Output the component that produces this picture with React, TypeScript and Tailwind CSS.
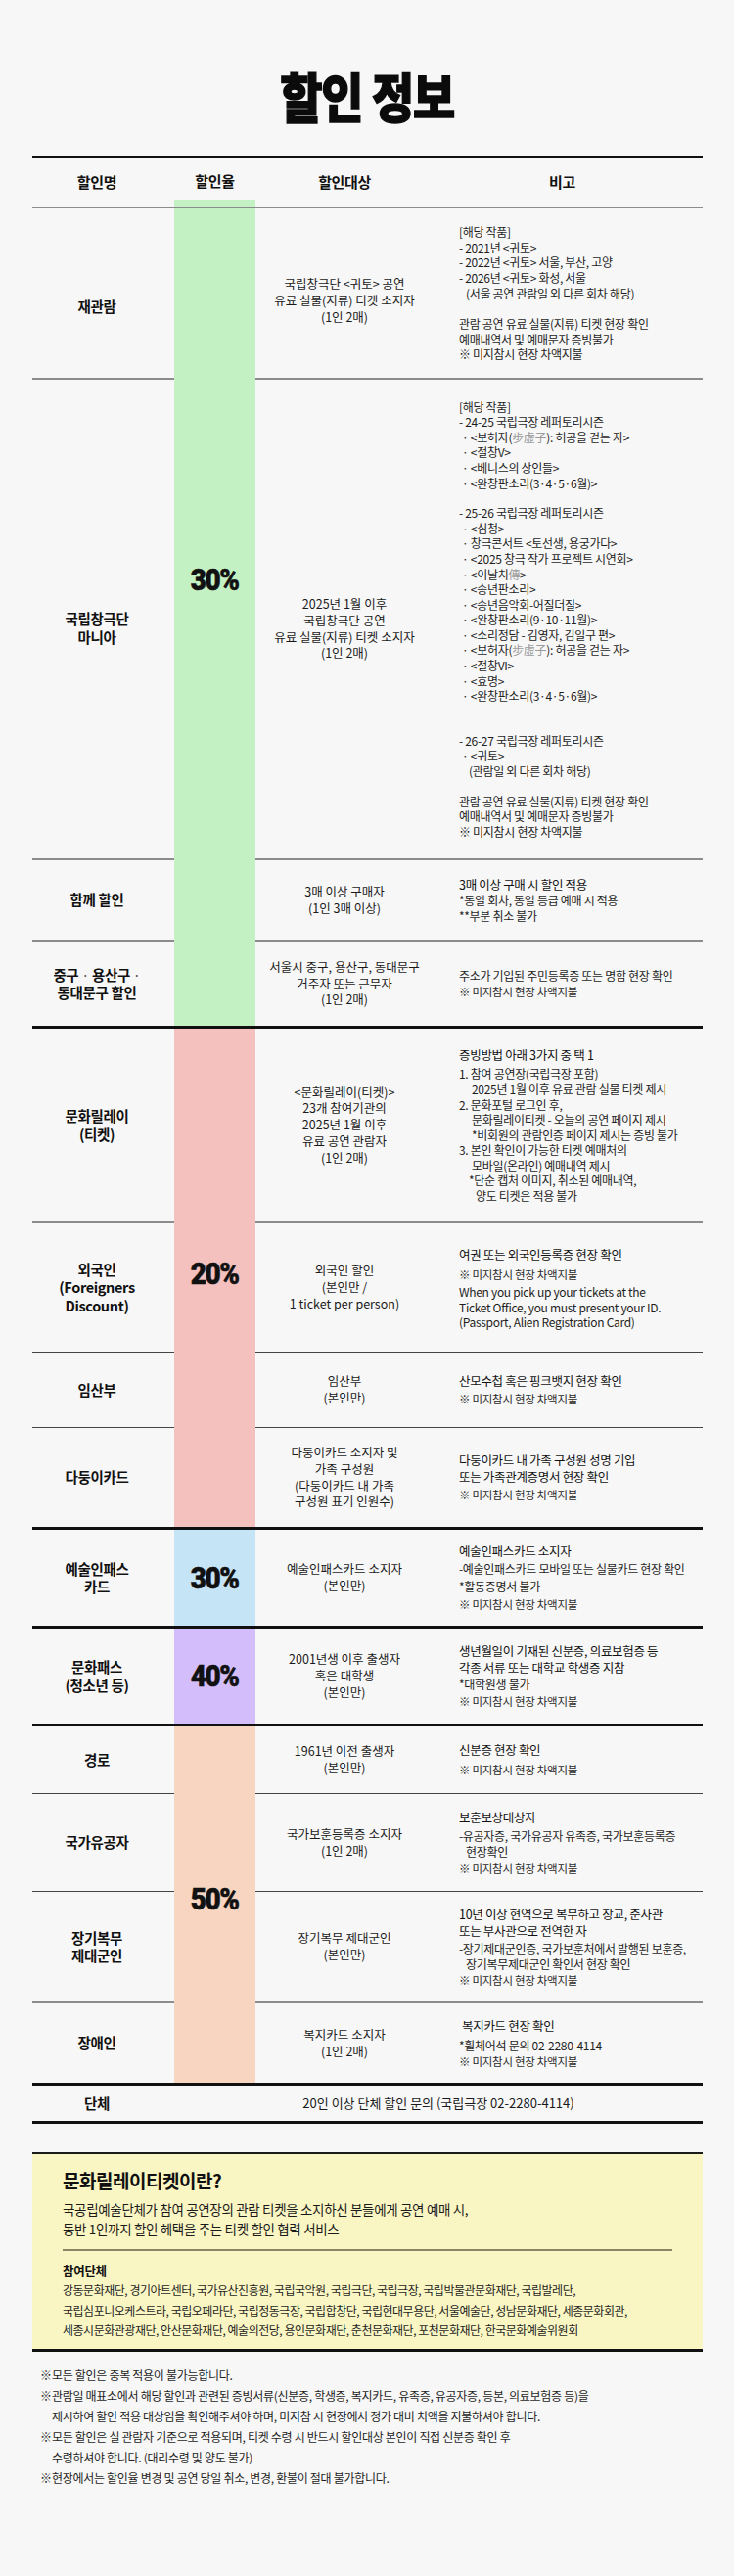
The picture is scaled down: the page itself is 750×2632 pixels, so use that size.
import React from 'react';
import clsx from 'clsx';

type Row = {
  name: React.ReactNode;
  h: string;
  border?: 'gray' | 'dark';
  namePad?: string;
  target: React.ReactNode;
  targetPad?: string;
  notes: React.ReactNode;
};

function borderClass(b?: 'gray' | 'dark') {
  if (b === 'gray') return 'border-t-2 border-[#8c8c8c]';
  if (b === 'dark') return 'border-t border-[#444]';
  return '';
}

function N({ children, className }: { children: React.ReactNode; className?: string }) {
  return (
    <p className={clsx('whitespace-nowrap text-[12px] leading-[15.6px] tracking-tight text-[#1e1e1e]', className)}>
      {children}
    </p>
  );
}

function H({ children, className }: { children: React.ReactNode; className?: string }) {
  return (
    <p className={clsx('whitespace-nowrap text-[12.5px] leading-[17px] tracking-tight text-[#111]', className)}>
      {children}
    </p>
  );
}

function S({ className }: { className?: string }) {
  return (
    <p className={clsx('whitespace-nowrap text-[11.5px] leading-[17px] tracking-tight text-[#2a2a2a]', className)}>
      ※ 미지참시 현장 차액지불
    </p>
  );
}

function Gray({ children }: { children: React.ReactNode }) {
  return <span className="text-[#9a9a9a]">{children}</span>;
}

function Lines({ items }: { items: string[] }) {
  return (
    <>
      {items.map((t, i) => (
        <React.Fragment key={i}>
          {i > 0 && <br />}
          {t}
        </React.Fragment>
      ))}
    </>
  );
}

function Group({
  rows,
  color,
  rate,
  rateClass,
}: {
  rows: Row[];
  color: string;
  rate: string;
  rateClass?: string;
}) {
  return (
    <div className="flex">
      <div className="flex w-[145px] flex-col">
        {rows.map((r, i) => (
          <div
            key={i}
            className={clsx(
              'flex items-center justify-center pr-[13px] text-center text-[14.5px] font-bold leading-[18.5px] tracking-tight text-[#111]',
              r.h,
              i > 0 && borderClass(r.border),
              r.namePad,
            )}
          >
            <div>{r.name}</div>
          </div>
        ))}
      </div>
      <div className={clsx('flex w-[83px] flex-col items-center', color, rateClass ?? 'justify-center')}>
        <span className="inline-block scale-x-[0.9] font-['Roboto','Noto_Sans',sans-serif] text-[31px] font-black leading-none tracking-tighter text-[#111] [-webkit-text-stroke:0.6px_#111]">
          {rate}
        </span>
      </div>
      <div className="flex w-[457px] flex-col">
        {rows.map((r, i) => (
          <div key={i} className={clsx('flex', r.h, i > 0 && borderClass(r.border))}>
            <div
              className={clsx(
                'flex w-[182px] items-center justify-center text-center text-[12.5px] leading-[16.7px] text-[#1a1a1a]',
                r.targetPad,
              )}
            >
              <div>{r.target}</div>
            </div>
            <div className="flex flex-1 flex-col justify-center pl-[26px]">{r.notes}</div>
          </div>
        ))}
      </div>
    </div>
  );
}

function Thick() {
  return <div className="h-[3px] bg-[#111]" />;
}

const greenRows: Row[] = [
  {
    name: '재관람',
    h: 'h-[173px]',
    namePad: 'pt-[28px]',
    target: <Lines items={['국립창극단 <귀토> 공연', '유료 실물(지류) 티켓 소지자', '(1인 2매)']} />,
    targetPad: 'pt-[16px]',
    notes: (
      <>
        <N>[해당 작품]</N>
        <N>- 2021년 &lt;귀토&gt;</N>
        <N>- 2022년 &lt;귀토&gt; 서울, 부산, 고양</N>
        <N>- 2026년 &lt;귀토&gt; 화성, 서울</N>
        <N className="pl-[7px]">(서울 공연 관람일 외 다른 회차 해당)</N>
        <div className="h-[16px]" />
        <N>관람 공연 유료 실물(지류) 티켓 현장 확인</N>
        <N>예매내역서 및 예매문자 증빙불가</N>
        <N>※ 미지참시 현장 차액지불</N>
      </>
    ),
  },
  {
    name: <Lines items={['국립창극단', '마니아']} />,
    h: 'h-[491px]',
    border: 'gray',
    namePad: 'pt-[18px]',
    target: <Lines items={['2025년 1월 이후', '국립창극단 공연', '유료 실물(지류) 티켓 소지자', '(1인 2매)']} />,
    targetPad: 'pt-[20px]',
    notes: (
      <>
        <N>[해당 작품]</N>
        <N>- 24-25 국립극장 레퍼토리시즌</N>
        <N className="pl-[3px]">
          · &lt;보허자(<Gray>步虛子</Gray>): 허공을 걷는 자&gt;
        </N>
        <N className="pl-[3px]">· &lt;절창V&gt;</N>
        <N className="pl-[3px]">· &lt;베니스의 상인들&gt;</N>
        <N className="pl-[3px]">· &lt;완창판소리(3·4·5·6월)&gt;</N>
        <div className="h-[15px]" />
        <N>- 25-26 국립극장 레퍼토리시즌</N>
        <N className="pl-[3px]">· &lt;심청&gt;</N>
        <N className="pl-[3px]">· 창극콘서트 &lt;토선생, 용궁가다&gt;</N>
        <N className="pl-[3px]">· &lt;2025 창극 작가 프로젝트 시연회&gt;</N>
        <N className="pl-[3px]">
          · &lt;이날치<Gray>傳</Gray>&gt;
        </N>
        <N className="pl-[3px]">· &lt;송년판소리&gt;</N>
        <N className="pl-[3px]">· &lt;송년음악회-어질더질&gt;</N>
        <N className="pl-[3px]">· &lt;완창판소리(9·10·11월)&gt;</N>
        <N className="pl-[3px]">· &lt;소리정담 - 김영자, 김일구 편&gt;</N>
        <N className="pl-[3px]">
          · &lt;보허자(<Gray>步虛子</Gray>): 허공을 걷는 자&gt;
        </N>
        <N className="pl-[3px]">· &lt;절창VI&gt;</N>
        <N className="pl-[3px]">· &lt;효명&gt;</N>
        <N className="pl-[3px]">· &lt;완창판소리(3·4·5·6월)&gt;</N>
        <div className="h-[30px]" />
        <N>- 26-27 국립극장 레퍼토리시즌</N>
        <N className="pl-[3px]">· &lt;귀토&gt;</N>
        <N className="pl-[10px]">(관람일 외 다른 회차 해당)</N>
        <div className="h-[15px]" />
        <N>관람 공연 유료 실물(지류) 티켓 현장 확인</N>
        <N>예매내역서 및 예매문자 증빙불가</N>
        <N>※ 미지참시 현장 차액지불</N>
      </>
    ),
  },
  {
    name: '함께 할인',
    h: 'h-[83px]',
    border: 'gray',
    target: <Lines items={['3매 이상 구매자', '(1인 3매 이상)']} />,
    notes: (
      <>
        <H className="leading-[16px]">3매 이상 구매 시 할인 적용</H>
        <N className="leading-[16px]">*동일 회차, 동일 등급 예매 시 적용</N>
        <N className="leading-[16px]">**부분 취소 불가</N>
      </>
    ),
  },
  {
    name: (
      <>
        중구 <span className="font-normal text-[#555]">·</span> 용산구 <span className="font-normal text-[#555]">·</span>
        <br />
        동대문구 할인
      </>
    ),
    h: 'h-[88px]',
    border: 'gray',
    target: <Lines items={['서울시 중구, 용산구, 동대문구', '거주자 또는 근무자', '(1인 2매)']} />,
    notes: (
      <>
        <N className="leading-[17px]">주소가 기입된 주민등록증 또는 명함 현장 확인</N>
        <S />
      </>
    ),
  },
];

const redRows: Row[] = [
  {
    name: <Lines items={['문화릴레이', '(티켓)']} />,
    h: 'h-[197px]',
    target: <Lines items={['<문화릴레이(티켓)>', '23개 참여기관의', '2025년 1월 이후', '유료 공연 관람자', '(1인 2매)']} />,
    notes: (
      <>
        <H className="mb-[3px]">증빙방법 아래 3가지 중 택 1</H>
        <N>1. 참여 공연장(국립극장 포함)</N>
        <N className="pl-[13px]">2025년 1월 이후 유료 관람 실물 티켓 제시</N>
        <N>2. 문화포털 로그인 후,</N>
        <N className="pl-[13px]">문화릴레이티켓 - 오늘의 공연 페이지 제시</N>
        <N className="pl-[13px]">*비회원의 관람인증 페이지 제시는 증빙 불가</N>
        <N>3. 본인 확인이 가능한 티켓 예매처의</N>
        <N className="pl-[13px]">모바일(온라인) 예매내역 제시</N>
        <N className="pl-[10px]">*단순 캡처 이미지, 취소된 예매내역,</N>
        <N className="pl-[17px]">양도 티켓은 적용 불가</N>
      </>
    ),
  },
  {
    name: <Lines items={['외국인', '(Foreigners', 'Discount)']} />,
    h: 'h-[133px]',
    border: 'gray',
    target: <Lines items={['외국인 할인', '(본인만 /', '1 ticket per person)']} />,
    notes: (
      <>
        <H className="leading-[20px]">여권 또는 외국인등록증 현장 확인</H>
        <S className="leading-[20px]" />
        <N className="leading-[15.7px]">When you pick up your tickets at the</N>
        <N className="leading-[15.7px]">Ticket Office, you must present your ID.</N>
        <N className="leading-[15.7px]">(Passport, Alien Registration Card)</N>
      </>
    ),
  },
  {
    name: '임산부',
    h: 'h-[77px]',
    border: 'dark',
    target: <Lines items={['임산부', '(본인만)']} />,
    notes: (
      <>
        <H className="leading-[19px]">산모수첩 혹은 핑크뱃지 현장 확인</H>
        <S className="leading-[19px]" />
      </>
    ),
  },
  {
    name: '다둥이카드',
    h: 'h-[102px]',
    border: 'dark',
    target: <Lines items={['다둥이카드 소지자 및', '가족 구성원', '(다둥이카드 내 가족', '구성원 표기 인원수)']} />,
    notes: (
      <>
        <H>다둥이카드 내 가족 구성원 성명 기입</H>
        <H>또는 가족관계증명서 현장 확인</H>
        <S className="mt-[2px]" />
      </>
    ),
  },
];

const blueRows: Row[] = [
  {
    name: <Lines items={['예술인패스', '카드']} />,
    h: 'h-[98px]',
    target: <Lines items={['예술인패스카드 소지자', '(본인만)']} />,
    notes: (
      <>
        <H className="leading-[18px]">예술인패스카드 소지자</H>
        <N className="leading-[18px]">-예술인패스카드 모바일 또는 실물카드 현장 확인</N>
        <N className="leading-[18px]">*활동증명서 불가</N>
        <S className="leading-[18px]" />
      </>
    ),
  },
];

const purpleRows: Row[] = [
  {
    name: <Lines items={['문화패스', '(청소년 등)']} />,
    h: 'h-[97px]',
    target: <Lines items={['2001년생 이후 출생자', '혹은 대학생', '(본인만)']} />,
    notes: (
      <>
        <H>생년월일이 기재된 신분증, 의료보험증 등</H>
        <H>각종 서류 또는 대학교 학생증 지참</H>
        <N className="leading-[18px]">*대학원생 불가</N>
        <S />
      </>
    ),
  },
];

const peachRows: Row[] = [
  {
    name: '경로',
    h: 'h-[68px]',
    target: <Lines items={['1961년 이전 출생자', '(본인만)']} />,
    notes: (
      <>
        <H className="leading-[20px]">신분증 현장 확인</H>
        <S className="leading-[20px]" />
      </>
    ),
  },
  {
    name: '국가유공자',
    h: 'h-[100px]',
    border: 'dark',
    target: <Lines items={['국가보훈등록증 소지자', '(1인 2매)']} />,
    notes: (
      <>
        <H className="mb-[3px]">보훈보상대상자</H>
        <N className="leading-[16.5px]">-유공자증, 국가유공자 유족증, 국가보훈등록증</N>
        <N className="pl-[7px] leading-[16.5px]">현장확인</N>
        <S />
      </>
    ),
  },
  {
    name: <Lines items={['장기복무', '제대군인']} />,
    h: 'h-[113px]',
    border: 'dark',
    target: <Lines items={['장기복무 제대군인', '(본인만)']} />,
    notes: (
      <>
        <H>10년 이상 현역으로 복무하고 장교, 준사관</H>
        <H className="mb-[2px]">또는 부사관으로 전역한 자</H>
        <N className="leading-[16px]">-장기제대군인증, 국가보훈처에서 발행된 보훈증,</N>
        <N className="pl-[7px] leading-[16px]">장기복무제대군인 확인서 현장 확인</N>
        <S />
      </>
    ),
  },
  {
    name: '장애인',
    h: 'h-[83px]',
    border: 'gray',
    target: <Lines items={['복지카드 소지자', '(1인 2매)']} />,
    notes: (
      <>
        <H className="mb-[3px] pl-[3px]">복지카드 현장 확인</H>
        <N className="leading-[17px]">*휠체어석 문의 02-2280-4114</N>
        <S />
      </>
    ),
  },
];

const orgLines = [
  '강동문화재단, 경기아트센터, 국가유산진흥원, 국립국악원, 국립극단, 국립극장, 국립박물관문화재단, 국립발레단,',
  '국립심포니오케스트라, 국립오페라단, 국립정동극장, 국립합창단, 국립현대무용단, 서울예술단, 성남문화재단, 세종문화회관,',
  '세종시문화관광재단, 안산문화재단, 예술의전당, 용인문화재단, 춘천문화재단, 포천문화재단, 한국문화예술위원회',
];

const footNotes: string[][] = [
  ['모든 할인은 중복 적용이 불가능합니다.'],
  [
    '관람일 매표소에서 해당 할인과 관련된 증빙서류(신분증, 학생증, 복지카드, 유족증, 유공자증, 등본, 의료보험증 등)을',
    '제시하여 할인 적용 대상임을 확인해주셔야 하며, 미지참 시 현장에서 정가 대비 치액을 지불하셔야 합니다.',
  ],
  [
    '모든 할인은 실 관람자 기준으로 적용되며, 티켓 수령 시 반드시 할인대상 본인이 직접 신분증 확인 후',
    '수령하셔야 합니다. (대리수령 및 양도 불가)',
  ],
  ['현장에서는 할인율 변경 및 공연 당일 취소, 변경, 환불이 절대 불가합니다.'],
];

export default function App() {
  return (
    <div className="min-h-[2632px] w-[750px] bg-[#f7f7f7] font-['Noto_Sans_CJK_KR','Noto_Sans',sans-serif] text-[#111]">
      <div className="flex h-[159px] justify-center pt-[71px]">
        <h1 className="inline-block scale-x-[0.87] text-[54px] font-black leading-none tracking-tight text-[#0b0b0b] [-webkit-text-stroke:1.5px_#0b0b0b]">
          할인 정보
        </h1>
      </div>

      <div className="mx-[33px] w-[685px]">
        <div className="h-[2px] bg-[#111]" />
        <div className="flex h-[50px] text-[15px] font-bold tracking-tight">
          <div className="flex w-[145px] items-center justify-center pr-[13px]">할인명</div>
          <div className="flex w-[83px] flex-col">
            <div className="flex flex-1 items-center justify-center pt-[5px]">할인율</div>
            <div className="h-[7px] bg-[#c4f1c3]" />
          </div>
          <div className="flex w-[182px] items-center justify-center">할인대상</div>
          <div className="flex flex-1 items-center justify-center pr-[12px]">비고</div>
        </div>
        <div className="h-[2px] bg-[#8c8c8c]" />

        <Group rows={greenRows} color="bg-[#c4f1c3]" rate="30%" rateClass="justify-start pt-[364px]" />
        <Thick />
        <Group rows={redRows} color="bg-[#f5c1bf]" rate="20%" rateClass="justify-center pb-[8px]" />
        <Thick />
        <Group rows={blueRows} color="bg-[#c5e4f6]" rate="30%" />
        <Thick />
        <Group rows={purpleRows} color="bg-[#d3bdfa]" rate="40%" />
        <Thick />
        <Group rows={peachRows} color="bg-[#f7d5c0]" rate="50%" rateClass="justify-center pb-[12px]" />
        <Thick />

        <div className="flex h-[36px] items-center">
          <div className="w-[145px] pr-[13px] text-center text-[14.5px] font-bold tracking-tight">단체</div>
          <div className="flex-1 text-center text-[13px] text-[#1a1a1a]">20인 이상 단체 할인 문의 (국립극장 02-2280-4114)</div>
        </div>
        <Thick />

        <div className="mt-[29px] h-[2px] bg-[#1a1a1a]" />
        <div className="h-[199px] bg-[#faf6c3] px-[31px] pt-[15px]">
          <h2 className="text-[19px] font-bold leading-[24px] tracking-tight text-[#111]">문화릴레이티켓이란?</h2>
          <p className="mt-[7px] text-[13.5px] leading-[20px] tracking-tight text-[#1a1a1a]">
            국공립예술단체가 참여 공연장의 관람 티켓을 소지하신 분들에게 공연 예매 시,
            <br />
            동반 1인까지 할인 혜택을 주는 티켓 할인 협력 서비스
          </p>
          <div className="mt-[11px] h-[2px] bg-[#8b8566]" />
          <p className="mt-[11px] text-[12.5px] font-bold leading-[18px] tracking-tight">참여단체</p>
          <div className="mt-[1px]">
            {orgLines.map((l, i) => (
              <p key={i} className="whitespace-nowrap text-[12px] leading-[20.7px] tracking-[-0.04em] text-[#1e1e1e]">
                {l}
              </p>
            ))}
          </div>
        </div>
        <div className="h-[3px] bg-[#111]" />

        <div className="mt-[13px] pl-[8px]">
          {footNotes.map((lines, i) => (
            <div key={i} className="flex text-[12px] leading-[21px] tracking-tight text-[#1e1e1e]">
              <span className="w-[12px] shrink-0">※</span>
              <div>
                {lines.map((l, j) => (
                  <p key={j} className="whitespace-nowrap">
                    {l}
                  </p>
                ))}
              </div>
            </div>
          ))}
        </div>
      </div>
    </div>
  );
}
